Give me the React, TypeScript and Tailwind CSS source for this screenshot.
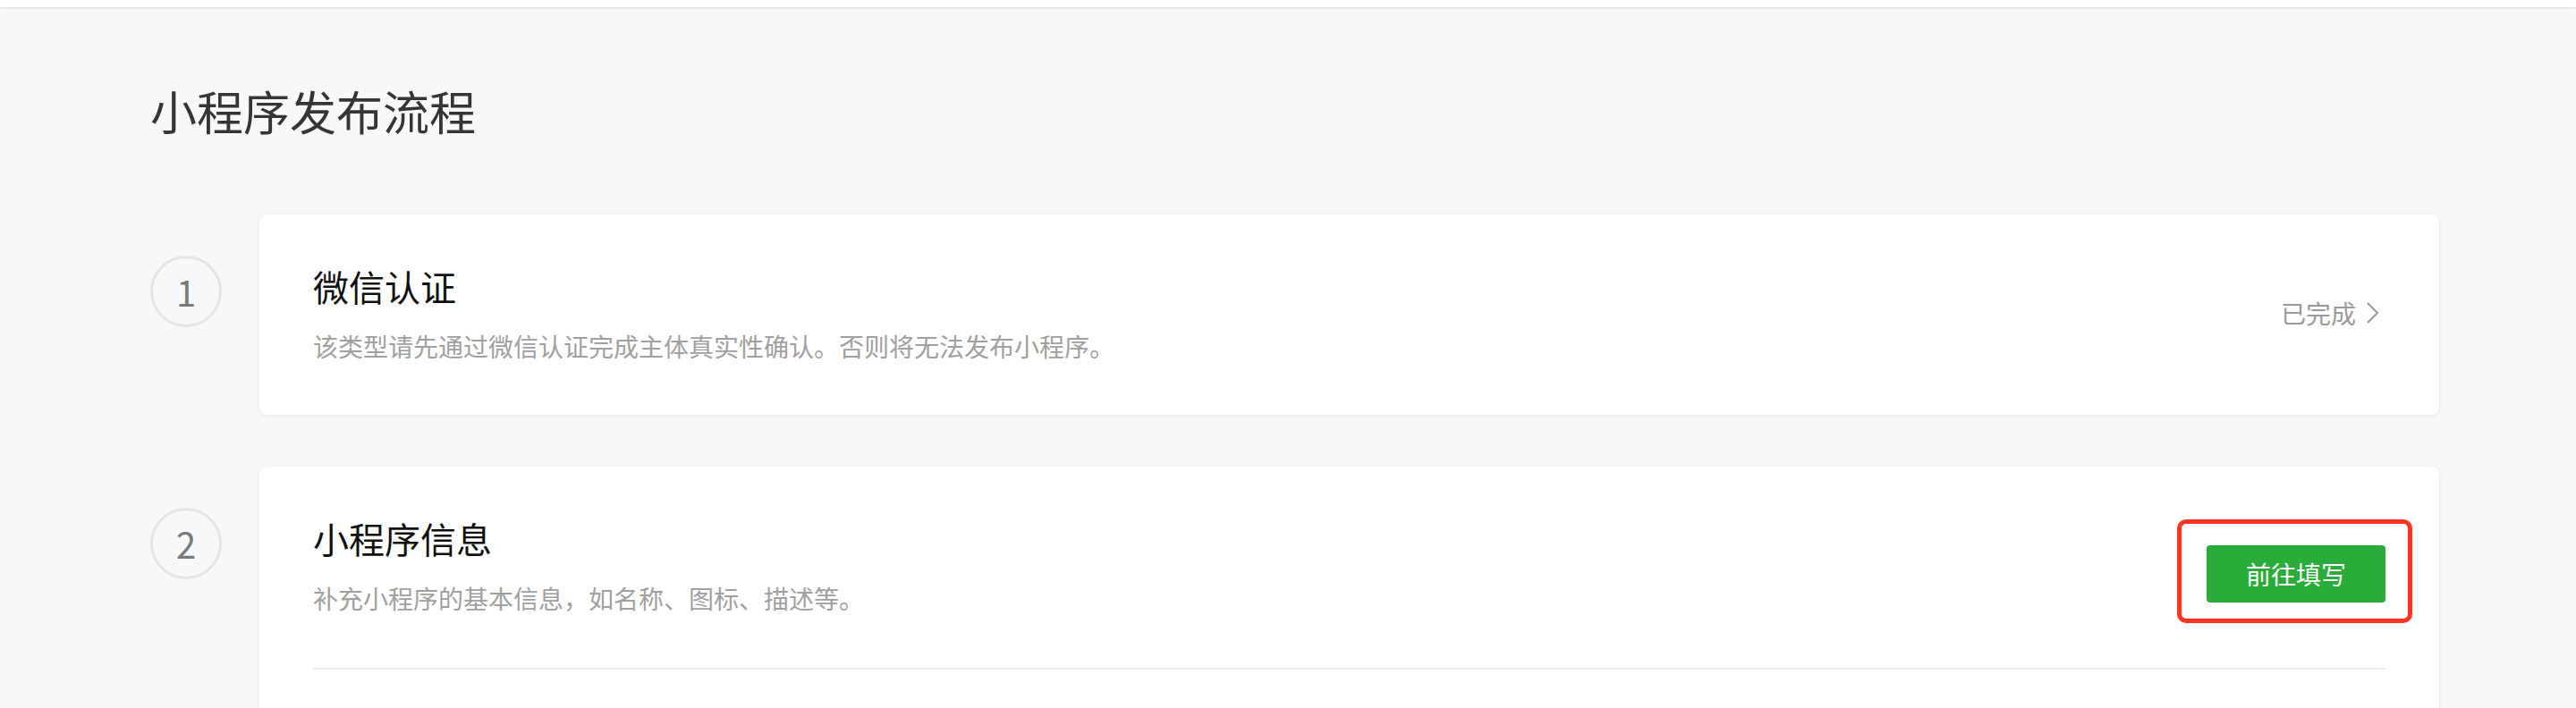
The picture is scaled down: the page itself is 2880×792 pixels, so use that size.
/** One step in the publish flow */
interface Step {
  index: number;
  title: string;
  desc: string;
  done: boolean;
}

const steps: Step[] = [
  {
    index: 1,
    title: "微信认证",
    desc: "该类型请先通过微信认证完成主体真实性确认。否则将无法发布小程序。",
    done: true,
  },
  {
    index: 2,
    title: "小程序信息",
    desc: "补充小程序的基本信息，如名称、图标、描述等。",
    done: false,
  },
];

function StepCircle({ n }: { n: number }) {
  return (
    <div className="mt-[46px] flex h-[80px] w-[80px] shrink-0 items-center justify-center rounded-full border-[3px] border-[#e4e5e7] text-[40px] leading-none text-[#7a7a7a]">
      {n}
    </div>
  );
}

export default function App() {
  return (
    <div className="min-h-screen bg-[#f7f8fa] font-['Noto_Sans_CJK_SC',sans-serif]">
      {/* top bar */}
      <div className="h-[8px] bg-white shadow-[0_1px_3px_rgba(0,0,0,0.12)]" />

      <div className="pl-[168px] pr-[153px] pt-[80px]">
        <h1 className="text-[52px] font-normal leading-[72px] text-[#353535]">
          小程序发布流程
        </h1>

        <div className="mt-[80px] flex flex-col gap-[58px]">
          {steps.map((step) => (
            <div key={step.index} className="flex items-start gap-[42px]">
              <StepCircle n={step.index} />

              <div className="flex-1 rounded-[8px] bg-white px-[60px] pt-[52px] pb-[57px] shadow-[0_1px_4px_rgba(0,0,0,0.07)]">
                <div className="flex items-center justify-between">
                  <div>
                    <div className="text-[40px] leading-[56px] text-[#111]">
                      {step.title}
                    </div>
                    <div className="mt-[19px] text-[28px] leading-[40px] text-[#a0a0a0]">
                      {step.desc}
                    </div>
                  </div>

                  {step.done ? (
                    <div className="flex items-center gap-[12px] text-[28px] leading-[40px] text-[#9a9a9a]">
                      <span>已完成</span>
                      <svg
                        viewBox="0 0 14 24"
                        className="mr-[7px] h-[24px] w-[14px]"
                        fill="none"
                        stroke="currentColor"
                        strokeWidth={2}
                        strokeLinecap="round"
                        strokeLinejoin="round"
                        aria-hidden="true"
                      >
                        <polyline points="1.5,1.5 12,12 1.5,22.5" />
                      </svg>
                    </div>
                  ) : (
                    <div className="relative mt-[20px]">
                      <button
                        type="button"
                        className="flex h-[64px] w-[200px] items-center justify-center rounded-[4px] bg-[#2aac3a] text-[28px] text-white"
                      >
                        前往填写
                      </button>
                      {/* annotation box */}
                      <div className="pointer-events-none absolute -top-[29px] -left-[33px] -right-[30px] -bottom-[23px] rounded-[10px] border-[5px] border-[#ff3322]" />
                    </div>
                  )}
                </div>

                {!step.done && (
                  <>
                    <div className="mt-[58px] h-[2px] bg-[#ebebeb]" />
                    <div className="h-[200px]" />
                  </>
                )}
              </div>
            </div>
          ))}
        </div>
      </div>
    </div>
  );
}
